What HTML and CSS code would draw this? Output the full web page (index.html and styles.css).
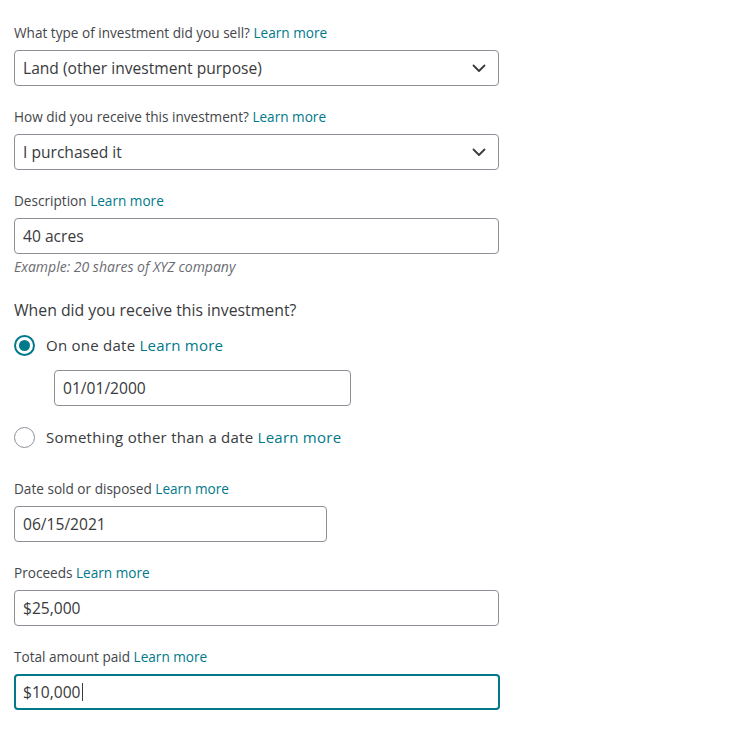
FILE: index.html
```html
<!DOCTYPE html>
<html>
<head>
<meta charset="utf-8">
<link rel="stylesheet" href="styles.css">
</head>
<body>
<form class="form">
  <div class="field">
    <div class="label">What type of investment did you sell? <a class="link">Learn more</a></div>
    <div class="box select wide"><span>Land (other investment purpose)</span>
      <svg class="chev" width="14" height="9" viewBox="0 0 14 9"><path d="M1.5 1.5 L7 7 L12.5 1.5" fill="none" stroke="#393a3d" stroke-width="1.8" stroke-linecap="round" stroke-linejoin="round"/></svg>
    </div>
  </div>
  <div class="field">
    <div class="label">How did you receive this investment? <a class="link">Learn more</a></div>
    <div class="box select wide"><span>I purchased it</span>
      <svg class="chev" width="14" height="9" viewBox="0 0 14 9"><path d="M1.5 1.5 L7 7 L12.5 1.5" fill="none" stroke="#393a3d" stroke-width="1.8" stroke-linecap="round" stroke-linejoin="round"/></svg>
    </div>
  </div>
  <div class="field">
    <div class="label">Description <a class="link">Learn more</a></div>
    <div class="box wide">40 acres</div>
    <div class="help">Example: 20 shares of XYZ company</div>
  </div>
  <div class="group">
    <div class="heading">When did you receive this investment?</div>
    <div class="radio-row">
      <span class="radio checked"></span>
      <span class="radio-text">On one date <a class="link">Learn more</a></span>
    </div>
    <div class="box date">01/01/2000</div>
    <div class="radio-row">
      <span class="radio"></span>
      <span class="radio-text">Something other than a date <a class="link">Learn more</a></span>
    </div>
  </div>
  <div class="field">
    <div class="label">Date sold or disposed <a class="link">Learn more</a></div>
    <div class="box mid">06/15/2021</div>
  </div>
  <div class="field">
    <div class="label">Proceeds <a class="link">Learn more</a></div>
    <div class="box wide">$25,000</div>
  </div>
  <div class="field">
    <div class="label">Total amount paid <a class="link">Learn more</a></div>
    <div class="box wide focus">$10,000<span class="caret"></span></div>
  </div>
</form>
</body>
</html>
```
FILE: styles.css
```css
html, body {
  margin: 0;
  padding: 0;
  background: #fff;
}
body {
  font-family: "Open Sans", "Lato", sans-serif;
  color: #393a3d;
}
.form {
  padding: 24px 0 0 14px;
  display: flex;
  flex-direction: column;
}
.field {
  display: flex;
  flex-direction: column;
  margin-bottom: 22px;
}
.label {
  font-size: 13.6px;
  line-height: 18px;
  margin-bottom: 8px;
  color: #44464a;
}
.link {
  color: #00798a;
  text-decoration: none;
}
.box {
  box-sizing: border-box;
  height: 36px;
  border: 1px solid #8d9096;
  border-radius: 4px;
  padding: 0 8px;
  display: flex;
  align-items: center;
  font-size: 15.6px;
  color: #393a3d;
}
.wide { width: 485px; }
.mid { width: 313px; }
.select {
  justify-content: space-between;
  padding-right: 12px;
}
.chev { display: block; }
.help {
  font-size: 14px;
  font-style: italic;
  color: #6b6c72;
  line-height: 18px;
  margin-top: 4px;
}
.group {
  display: flex;
  flex-direction: column;
  margin-bottom: 32px;
}
.heading {
  font-size: 15.8px;
  line-height: 22px;
  margin-top: 1px;
  margin-bottom: 13px;
  color: #393a3d;
}
.radio-row {
  display: flex;
  align-items: center;
  gap: 11px;
  height: 22px;
}
.radio {
  box-sizing: border-box;
  width: 21px;
  height: 21px;
  border-radius: 50%;
  border: 1px solid #8d9096;
  display: flex;
  align-items: center;
  justify-content: center;
}
.radio.checked {
  border: 2px solid #00798a;
}
.radio.checked::after {
  content: "";
  width: 11px;
  height: 11px;
  border-radius: 50%;
  background: #00798a;
}
.radio-text {
  font-size: 15px;
  letter-spacing: 0.25px;
}
.date {
  width: 297px;
  margin-left: 40px;
  margin-top: 14px;
  margin-bottom: 20px;
}
.focus {
  border: 2px solid #00798a;
  padding-left: 7px;
  width: 486px;
}
.caret {
  display: inline-block;
  width: 1px;
  height: 18px;
  background: #393a3d;
  margin-left: 1px;
}
```
